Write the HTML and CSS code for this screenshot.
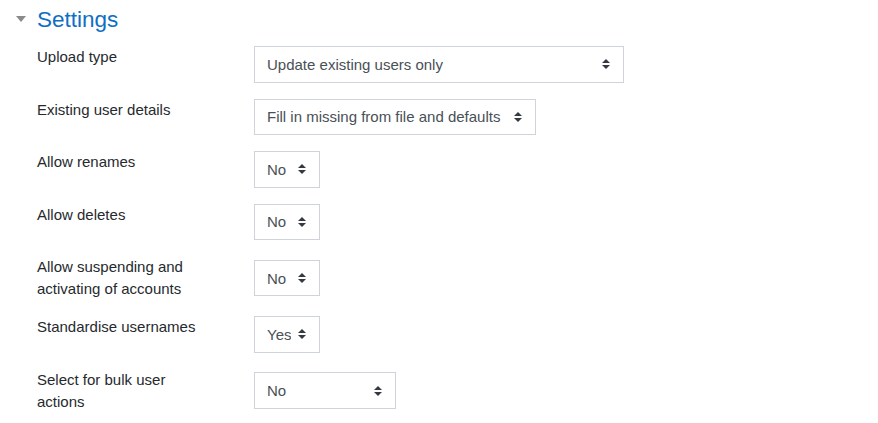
FILE: index.html
```html
<!DOCTYPE html>
<html lang="en">
<head>
  <meta charset="UTF-8" />
  <title>Upload users - Settings</title>
  <link rel="stylesheet" href="styles.css">
</head>
<body>
  <fieldset class="section">
    <legend class="section-title">
      <span class="caret"></span>
      Settings
    </legend>

    <div class="row">
      <label for="uutype">Upload type</label>
      <div class="control">
        <select id="uutype" class="w-370">
          <option>Update existing users only</option>
        </select>
      </div>
    </div>

    <div class="row">
      <label for="uuupdatetype">Existing user details</label>
      <div class="control">
        <select id="uuupdatetype" class="w-282">
          <option>Fill in missing from file and defaults</option>
        </select>
      </div>
    </div>

    <div class="row">
      <label for="uuallowrenames">Allow renames</label>
      <div class="control">
        <select id="uuallowrenames" class="w-66">
          <option>No</option>
        </select>
      </div>
    </div>

    <div class="row">
      <label for="uuallowdeletes">Allow deletes</label>
      <div class="control">
        <select id="uuallowdeletes" class="w-66">
          <option>No</option>
        </select>
      </div>
    </div>

    <div class="row">
      <label for="uuallowsuspends">Allow suspending and activating of accounts</label>
      <div class="control">
        <select id="uuallowsuspends" class="w-66">
          <option>No</option>
        </select>
      </div>
    </div>

    <div class="row">
      <label for="uustandardusernames">Standardise usernames</label>
      <div class="control">
        <select id="uustandardusernames" class="w-66">
          <option>Yes</option>
        </select>
      </div>
    </div>

    <div class="row">
      <label for="uubulk">Select for bulk user actions</label>
      <div class="control">
        <select id="uubulk" class="w-142">
          <option>No</option>
        </select>
      </div>
    </div>
  </fieldset>
</body>
</html>
```

FILE: styles.css
```css
body {
  margin: 0;
  background: #fff;
  font-family: "Liberation Sans", Arial, sans-serif;
  font-size: 15px;
  color: #262a2e;
}
.section {
  border: none;
  margin: 6px 0 0;
  padding: 0 0 0 37px;
}
.section-title {
  position: relative;
  padding: 0;
  margin: 0;
  font-size: 22.5px;
  line-height: 27px;
  color: #0f6fc5;
}
.caret {
  position: absolute;
  left: -21px;
  top: 10px;
  width: 0;
  height: 0;
  border-left: 5.5px solid transparent;
  border-right: 5.5px solid transparent;
  border-top: 6px solid #8a8a8a;
}
.section-title + .row {
  margin-top: 13px;
}
.row {
  display: grid;
  grid-template-columns: 217px 1fr;
  margin-bottom: 16px;
}
.row label {
  align-self: start;
  line-height: 22px;
  padding-right: 40px;
}
.control {
  align-self: center;
}
select {
  display: block;
  height: 36.5px;
  padding: 0 28px 0 12px;
  border: 1px solid #ced4da;
  border-radius: 0;
  background: #fff url("data:image/svg+xml,%3csvg xmlns='http://www.w3.org/2000/svg' viewBox='0 0 8 10'%3e%3cpath fill='%23343a40' d='M4 0L0 4h8zM4 10L0 6h8z'/%3e%3c/svg%3e") no-repeat right 13px center / 8px 10px;
  -webkit-appearance: none;
  appearance: none;
  font-family: inherit;
  font-size: 15px;
  color: #495057;
}
.w-370 { width: 370px; }
.w-282 { width: 282px; }
.w-142 { width: 142px; }
.w-66 { width: 66px; }
```
